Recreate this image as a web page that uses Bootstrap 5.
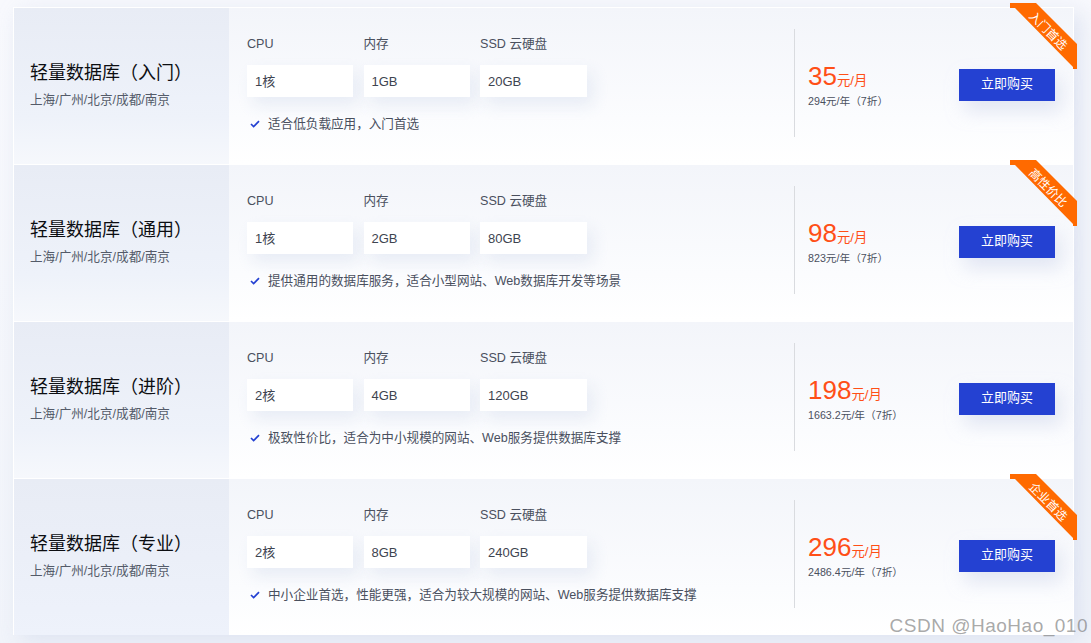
<!DOCTYPE html>
<html lang="zh-CN">

<head>
    <meta charset="UTF-8">
    <meta name="viewport" content="width=device-width, initial-scale=1.0">
    <title>轻量数据库</title>
    <link rel="stylesheet" href="https://cdn.jsdelivr.net/npm/bootstrap@5.3.3/dist/css/bootstrap.min.css">
    <style>
        html, body {
            height: 100%;
        }

        body {
            background: linear-gradient(180deg, #f8f9fd 0%, #f1f4fa 100%);
            font-family: "Liberation Sans", "Noto Sans CJK SC", sans-serif;
            font-size: 12.6px;
            color: #4a505e;
            overflow: hidden;
            position: relative;
        }

        .plans {
            width: 1061px;
            margin: 7px 0 0 13px;
            box-shadow: 8px 6px 20px rgba(215, 222, 238, .75);
        }

        .plan {
            height: 157px;
            border: 1px solid #fff;
            border-width: 1px 1px 0 1px;
            background: #fff;
        }

        .plan-name {
            width: 215px;
            padding: 0 0 2px 16px;
            background: linear-gradient(180deg, #e8ecf5 0%, #eef2fa 70%, #f6f8fc 100%);
        }

        .plan:last-child .plan-name {
            background: linear-gradient(180deg, #e8ecf5 0%, #eef2fb 100%);
        }

        .plan-name h5 {
            font-size: 18px;
            font-weight: 400;
            color: #0c0e12;
            line-height: 24px;
            margin-bottom: 6px;
        }

        .plan-name p {
            margin: 0;
            line-height: 18px;
            color: #545b69;
        }

        .plan-body {
            background: linear-gradient(180deg, #f3f5fa 0%, #fbfcfe 70%, #fff 100%);
        }

        .plan-specs {
            width: 565px;
            padding: 26px 0 0 18px;
        }

        .spec-grid {
            display: grid;
            grid-template-columns: 106px 106px 107px;
            column-gap: 10.5px;
            row-gap: 11px;
            line-height: 20px;
        }

        .spec-value {
            height: 32px;
            line-height: 34px;
            padding-left: 8px;
            font-size: 13px;
            background: #fff;
            color: #3e4450;
            box-shadow: 6px 8px 16px rgba(220, 226, 240, .6);
        }

        .plan-note {
            margin-top: 18px;
            line-height: 18px;
            gap: 8px;
            padding-left: 3px;
        }

        .plan-price {
            height: 108px;
            margin-top: 21px;
            padding: 4px 0 0 13px;
            border-left: 1px solid #d9dbdf;
        }

        .price-num {
            font-size: 26px;
            line-height: 30px;
            margin-bottom: -3px;
            color: #ff4f17;
        }

        .price-unit {
            font-size: 13.4px;
            color: #ff4f17;
        }

        .price-year {
            font-size: 10.7px;
            line-height: 16px;
            color: #4a505e;
        }

        .btn-buy {
            width: 96px;
            height: 32px;
            padding: 0 0 2px;
            font-size: 13px;
            line-height: 30px;
            border: 0;
            border-radius: 0;
            color: #fff;
            background: #2441d2;
            box-shadow: 6px 10px 18px rgba(205, 213, 235, .55);
        }

        .btn-buy:hover {
            color: #fff;
            background: #1f38b8;
        }

        .plan-action {
            margin: 61px 18px 0 auto;
        }

        .ribbon {
            position: absolute;
            top: -5px;
            right: -4px;
            width: 67px;
            height: 66px;
        }

        .ribbon span {
            position: absolute;
            left: 8px;
            top: 20px;
            width: 60px;
            text-align: center;
            line-height: 16px;
            font-size: 12px;
            color: #fff;
            transform: rotate(45deg);
        }

        .watermark {
            position: absolute;
            right: 3px;
            bottom: 5px;
            font-size: 19px;
            line-height: 24px;
            letter-spacing: .5px;
            color: rgba(120, 120, 120, .65);
        }
    </style>
</head>

<body>
    <div class="plans">

        <!-- 入门 -->
        <div class="plan d-flex position-relative">
            <div class="plan-name d-flex flex-column justify-content-center">
                <h5>轻量数据库（入门）</h5>
                <p>上海/广州/北京/成都/南京</p>
            </div>
            <div class="plan-body d-flex flex-grow-1">
                <div class="plan-specs">
                    <div class="spec-grid">
                        <div>CPU</div>
                        <div>内存</div>
                        <div>SSD 云硬盘</div>
                        <div class="spec-value">1核</div>
                        <div class="spec-value">1GB</div>
                        <div class="spec-value">20GB</div>
                    </div>
                    <div class="plan-note d-flex align-items-center">
                        <svg width="10" height="8" viewBox="0 0 10 8"><path d="M1 4l2.6 2.6L9 1.2" fill="none" stroke="#2441d2" stroke-width="1.7"/></svg>
                        <span>适合低负载应用，入门首选</span>
                    </div>
                </div>
                <div class="plan-price d-flex flex-column justify-content-center">
                    <div class="price-num">35<span class="price-unit">元/月</span></div>
                    <div class="price-year">294元/年（7折）</div>
                </div>
                <div class="plan-action">
                    <button class="btn btn-buy">立即购买</button>
                </div>
            </div>
            <div class="ribbon">
                <svg width="67" height="66" viewBox="0 0 67 66"><polygon points="0,0 26,0 67,41 67,66 63,66 63,64 5,5 0,5" fill="#ff6a00"/></svg>
                <span>入门首选</span>
            </div>
        </div>

        <!-- 通用 -->
        <div class="plan d-flex position-relative">
            <div class="plan-name d-flex flex-column justify-content-center">
                <h5>轻量数据库（通用）</h5>
                <p>上海/广州/北京/成都/南京</p>
            </div>
            <div class="plan-body d-flex flex-grow-1">
                <div class="plan-specs">
                    <div class="spec-grid">
                        <div>CPU</div>
                        <div>内存</div>
                        <div>SSD 云硬盘</div>
                        <div class="spec-value">1核</div>
                        <div class="spec-value">2GB</div>
                        <div class="spec-value">80GB</div>
                    </div>
                    <div class="plan-note d-flex align-items-center">
                        <svg width="10" height="8" viewBox="0 0 10 8"><path d="M1 4l2.6 2.6L9 1.2" fill="none" stroke="#2441d2" stroke-width="1.7"/></svg>
                        <span>提供通用的数据库服务，适合小型网站、Web数据库开发等场景</span>
                    </div>
                </div>
                <div class="plan-price d-flex flex-column justify-content-center">
                    <div class="price-num">98<span class="price-unit">元/月</span></div>
                    <div class="price-year">823元/年（7折）</div>
                </div>
                <div class="plan-action">
                    <button class="btn btn-buy">立即购买</button>
                </div>
            </div>
            <div class="ribbon">
                <svg width="67" height="66" viewBox="0 0 67 66"><polygon points="0,0 26,0 67,41 67,66 63,66 63,64 5,5 0,5" fill="#ff6a00"/></svg>
                <span>高性价比</span>
            </div>
        </div>

        <!-- 进阶 -->
        <div class="plan d-flex position-relative">
            <div class="plan-name d-flex flex-column justify-content-center">
                <h5>轻量数据库（进阶）</h5>
                <p>上海/广州/北京/成都/南京</p>
            </div>
            <div class="plan-body d-flex flex-grow-1">
                <div class="plan-specs">
                    <div class="spec-grid">
                        <div>CPU</div>
                        <div>内存</div>
                        <div>SSD 云硬盘</div>
                        <div class="spec-value">2核</div>
                        <div class="spec-value">4GB</div>
                        <div class="spec-value">120GB</div>
                    </div>
                    <div class="plan-note d-flex align-items-center">
                        <svg width="10" height="8" viewBox="0 0 10 8"><path d="M1 4l2.6 2.6L9 1.2" fill="none" stroke="#2441d2" stroke-width="1.7"/></svg>
                        <span>极致性价比，适合为中小规模的网站、Web服务提供数据库支撑</span>
                    </div>
                </div>
                <div class="plan-price d-flex flex-column justify-content-center">
                    <div class="price-num">198<span class="price-unit">元/月</span></div>
                    <div class="price-year">1663.2元/年（7折）</div>
                </div>
                <div class="plan-action">
                    <button class="btn btn-buy">立即购买</button>
                </div>
            </div>
        </div>

        <!-- 专业 -->
        <div class="plan d-flex position-relative">
            <div class="plan-name d-flex flex-column justify-content-center">
                <h5>轻量数据库（专业）</h5>
                <p>上海/广州/北京/成都/南京</p>
            </div>
            <div class="plan-body d-flex flex-grow-1">
                <div class="plan-specs">
                    <div class="spec-grid">
                        <div>CPU</div>
                        <div>内存</div>
                        <div>SSD 云硬盘</div>
                        <div class="spec-value">2核</div>
                        <div class="spec-value">8GB</div>
                        <div class="spec-value">240GB</div>
                    </div>
                    <div class="plan-note d-flex align-items-center">
                        <svg width="10" height="8" viewBox="0 0 10 8"><path d="M1 4l2.6 2.6L9 1.2" fill="none" stroke="#2441d2" stroke-width="1.7"/></svg>
                        <span>中小企业首选，性能更强，适合为较大规模的网站、Web服务提供数据库支撑</span>
                    </div>
                </div>
                <div class="plan-price d-flex flex-column justify-content-center">
                    <div class="price-num">296<span class="price-unit">元/月</span></div>
                    <div class="price-year">2486.4元/年（7折）</div>
                </div>
                <div class="plan-action">
                    <button class="btn btn-buy">立即购买</button>
                </div>
            </div>
            <div class="ribbon">
                <svg width="67" height="66" viewBox="0 0 67 66"><polygon points="0,0 26,0 67,41 67,66 63,66 63,64 5,5 0,5" fill="#ff6a00"/></svg>
                <span>企业首选</span>
            </div>
        </div>
    </div>

    <div class="watermark">CSDN @HaoHao_010</div>

    <script src="https://cdn.jsdelivr.net/npm/bootstrap@5.3.3/dist/js/bootstrap.bundle.min.js"></script>
</body>

</html>
